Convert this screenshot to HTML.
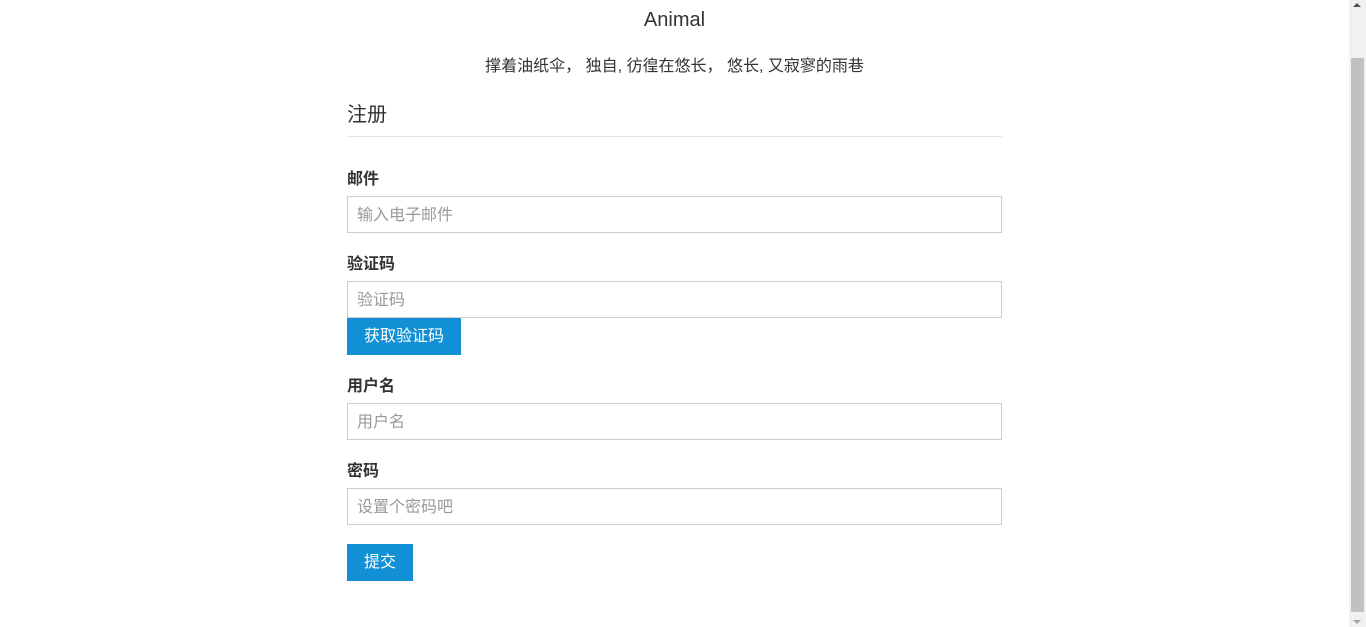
<!DOCTYPE html>
<html><head><meta charset="utf-8"><style>
body{margin:0;width:1366px;height:627px;overflow:hidden;background:#fff;font-family:"Liberation Sans","Noto Sans CJK SC",sans-serif;color:#333;position:relative}
.a{position:absolute}
.title{left:0;width:1349px;top:8px;text-align:center;font-size:20px;line-height:24px;color:#333}
.sub{left:0;width:1349px;top:57px;text-align:center;font-size:16px;line-height:20px;color:#333}
.h{left:347px;top:103px;font-size:20px;line-height:24px}
.hr{left:347px;top:136px;width:655px;height:1px;background:#e5e5e5}
.lbl{left:347px;font-size:16px;font-weight:bold;line-height:20px}
.inp{left:347px;width:653px;height:35px;border:1px solid #ccc;font-size:16px;color:#999;line-height:37px;box-sizing:content-box}
.inp span{padding-left:9px}
.btn{background:#1190d5;color:#fff;font-size:16px;text-align:center;line-height:38px;height:37px}
.sb{left:1349px;top:0;width:17px;height:627px;background:#f1f1f1}
.th{left:1351px;top:58px;width:13px;height:554px;background:#c1c1c1}
</style></head><body>
<div class="a title">Animal</div>
<div class="a sub">撑着油纸伞， 独自, 彷徨在悠长， 悠长, 又寂寥的雨巷</div>
<div class="a h">注册</div>
<div class="a hr"></div>
<div class="a lbl" style="top:170px">邮件</div>
<div class="a inp" style="top:196px"><span>输入电子邮件</span></div>
<div class="a lbl" style="top:255px">验证码</div>
<div class="a inp" style="top:281px"><span>验证码</span></div>
<div class="a btn" style="left:347px;top:318px;width:114px">获取验证码</div>
<div class="a lbl" style="top:377px">用户名</div>
<div class="a inp" style="top:403px"><span>用户名</span></div>
<div class="a lbl" style="top:462px">密码</div>
<div class="a inp" style="top:488px"><span>设置个密码吧</span></div>
<div class="a btn" style="left:347px;top:544px;width:66px">提交</div>
<div class="a sb"></div>
<div class="a th"></div>
<div class="a" style="left:1353px;top:3px;width:0;height:0;border-left:4px solid transparent;border-right:4px solid transparent;border-bottom:4px solid #505050"></div>
<div class="a" style="left:1353px;top:620px;width:0;height:0;border-left:4px solid transparent;border-right:4px solid transparent;border-top:4px solid #a3a3a3"></div>
</body></html>
